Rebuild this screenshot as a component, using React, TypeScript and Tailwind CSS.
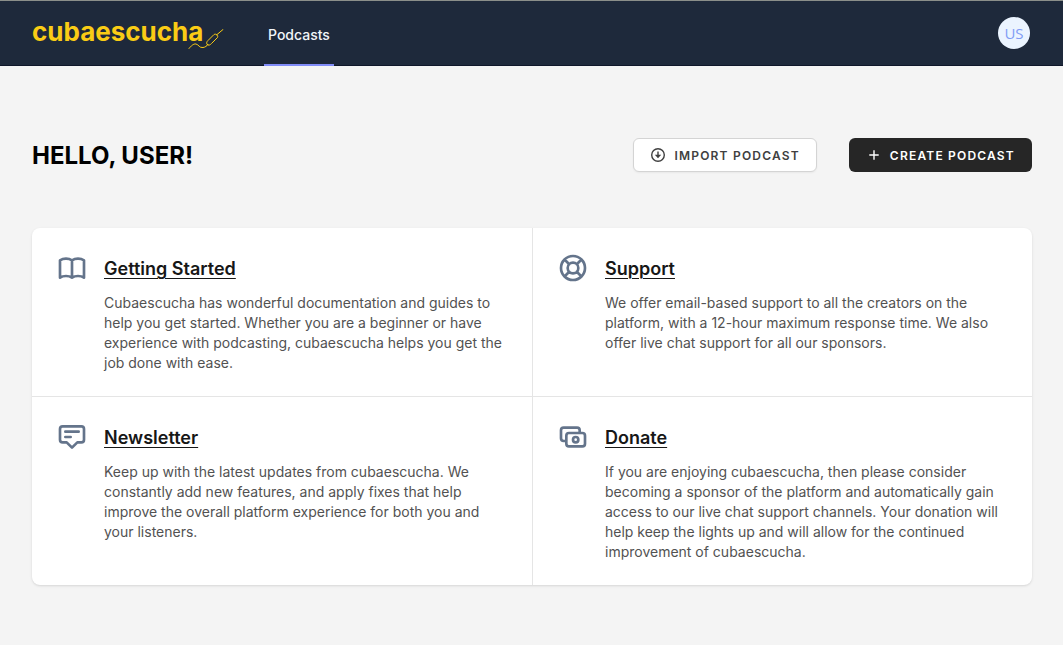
import React from "react";

type Feature = { title: string; text: string; icon: string };

const features: Feature[] = [
  {
    title: "Getting Started",
    text: "Cubaescucha has wonderful documentation and guides to help you get started. Whether you are a beginner or have experience with podcasting, cubaescucha helps you get the job done with ease.",
    icon: "M12 6.253v13m0-13C10.832 5.477 9.246 5 7.5 5S4.168 5.477 3 6.253v13C4.168 18.477 5.754 18 7.5 18s3.332.477 4.5 1.253m0-13C13.168 5.477 14.754 5 16.5 5c1.747 0 3.332.477 4.5 1.253v13C19.832 18.477 18.247 18 16.5 18c-1.746 0-3.332.477-4.5 1.253",
  },
  {
    title: "Support",
    text: "We offer email-based support to all the creators on the platform, with a 12-hour maximum response time. We also offer live chat support for all our sponsors.",
    icon: "M18.364 5.636l-3.536 3.536m0 5.656l3.536 3.536M9.172 9.172L5.636 5.636m3.536 9.192l-3.536 3.536M21 12a9 9 0 11-18 0 9 9 0 0118 0zm-5 0a4 4 0 11-8 0 4 4 0 018 0z",
  },
  {
    title: "Newsletter",
    text: "Keep up with the latest updates from cubaescucha. We constantly add new features, and apply fixes that help improve the overall platform experience for both you and your listeners.",
    icon: "M7 8h10M7 12h4m1 8l-4-4H5a2 2 0 01-2-2V6a2 2 0 012-2h14a2 2 0 012 2v8a2 2 0 01-2 2h-3l-4 4z",
  },
  {
    title: "Donate",
    text: "If you are enjoying cubaescucha, then please consider becoming a sponsor of the platform and automatically gain access to our live chat support channels. Your donation will help keep the lights up and will allow for the continued improvement of cubaescucha.",
    icon: "M17 9V7a2 2 0 00-2-2H5a2 2 0 00-2 2v6a2 2 0 002 2h2m2 4h10a2 2 0 002-2v-6a2 2 0 00-2-2H9a2 2 0 00-2 2v6a2 2 0 002 2zm7-5a2 2 0 11-4 0 2 2 0 014 0z",
  },
];

const cellBorders = [
  "",
  "border-t md:border-t-0 md:border-l",
  "border-t",
  "border-t md:border-l",
];

function Logo() {
  return (
    <a href="#home" className="relative flex h-16 w-48 items-center text-[26px] leading-8 font-bold text-[#facc15]">
      <span className="pb-0.5">cubaescucha</span>
      <svg
        className="absolute right-0 bottom-4 h-5 w-9"
        viewBox="0 0 36 20"
        fill="none"
        stroke="#facc15"
        strokeWidth="1"
        strokeLinecap="round"
        strokeLinejoin="round"
        aria-hidden="true"
      >
        <path d="M1 19.5C3 17 5.500 14.500 8 15C11 15.700 11 19 15 18.500C17.500 18.200 18.500 17 20 15.500" />
        <path d="M19.500 15.800C18 14.500 18.500 13 20 11.500L26 5.500C28 4.500 30.500 6 29.500 8.500L23.500 14.500C22 16.200 20.500 16.700 19.500 15.800Z" />
        <path d="M28.500 6L35 0.500" />
      </svg>
    </a>
  );
}

export default function App() {
  return (
    <div className="min-h-screen bg-[#f4f4f4] font-['Inter',sans-serif] text-black antialiased">
      <header className="border-t border-b border-t-[#8b8f8a] border-b-[#0f172a] bg-[#1e293b]">
        <div className="flex h-16 justify-between pr-[33px] pl-8">
          <nav className="flex gap-10" aria-label="Main">
            <Logo />
            <a
              href="#podcasts"
              className="-mb-px flex items-center border-b-2 border-[#818cf8] px-1 pt-1 text-sm font-medium text-[#f1f5f9]"
            >
              Podcasts
            </a>
          </nav>
          <button
            type="button"
            aria-label="User menu"
            className="flex size-8 items-center justify-center self-center rounded-full bg-[#ebf4ff] font-['Open_Sans',sans-serif] text-[15px] leading-5 text-[#7f9cf5]"
          >
            US
          </button>
        </div>
      </header>

      <main className="pt-18 pr-[31px] pb-12 pl-8">
        <div className="flex flex-wrap items-center justify-between gap-4">
          <h1 className="pt-0.5 text-2xl leading-8 font-bold uppercase">Hello, user!</h1>
          <div className="flex flex-wrap gap-8">
            <button
              type="button"
              className="flex h-[34px] items-center gap-2 rounded-md border border-[#d4d4d4] bg-white px-4 text-xs font-semibold tracking-widest text-[#404040] uppercase shadow-xs"
            >
              <svg className="size-4" viewBox="0 0 16 16" fill="none" stroke="currentColor" strokeWidth="1.400" aria-hidden="true">
                <circle cx="8" cy="8" r="6.300" />
                <path d="M8 4.500v4" />
                <path d="M4.800 7.700h6.400L8 11.200z" fill="currentColor" stroke="none" />
              </svg>
              <span className="pt-0.5">Import podcast</span>
            </button>
            <button
              type="button"
              className="flex h-[34px] items-center gap-2 rounded-md border border-transparent bg-[#262626] px-4 text-xs font-semibold tracking-widest text-white uppercase"
            >
              <svg className="size-4" viewBox="0 0 16 16" fill="none" stroke="currentColor" strokeWidth="1.400" aria-hidden="true">
                <path d="M8 3.300v9.400M3.300 8h9.400" />
              </svg>
              <span className="pt-0.5">Create podcast</span>
            </button>
          </div>
        </div>

        <section className="mt-14 grid grid-cols-1 overflow-hidden rounded-lg bg-white shadow-sm md:grid-cols-2">
          {features.map((feature, index) => (
            <article key={feature.title} className={`flex items-start gap-4 border-[#e5e5e5] p-6 ${cellBorders[index]}`}>
              <svg
                className="size-8 shrink-0 text-[#64748b]"
                viewBox="0 0 24 24"
                fill="none"
                stroke="currentColor"
                strokeWidth="2"
                strokeLinecap="round"
                strokeLinejoin="round"
                aria-hidden="true"
              >
                <path d={feature.icon} />
              </svg>
              <div className="-mb-px pt-[3px]">
                <h2 className="text-lg leading-7 font-semibold text-[#171717]">
                  <a href="#learn-more" className="underline decoration-1 underline-offset-[3px]">{feature.title}</a>
                </h2>
                <p className="mt-2.5 text-sm leading-5 text-[#525252]">{feature.text}</p>
              </div>
            </article>
          ))}
        </section>
      </main>
    </div>
  );
}
